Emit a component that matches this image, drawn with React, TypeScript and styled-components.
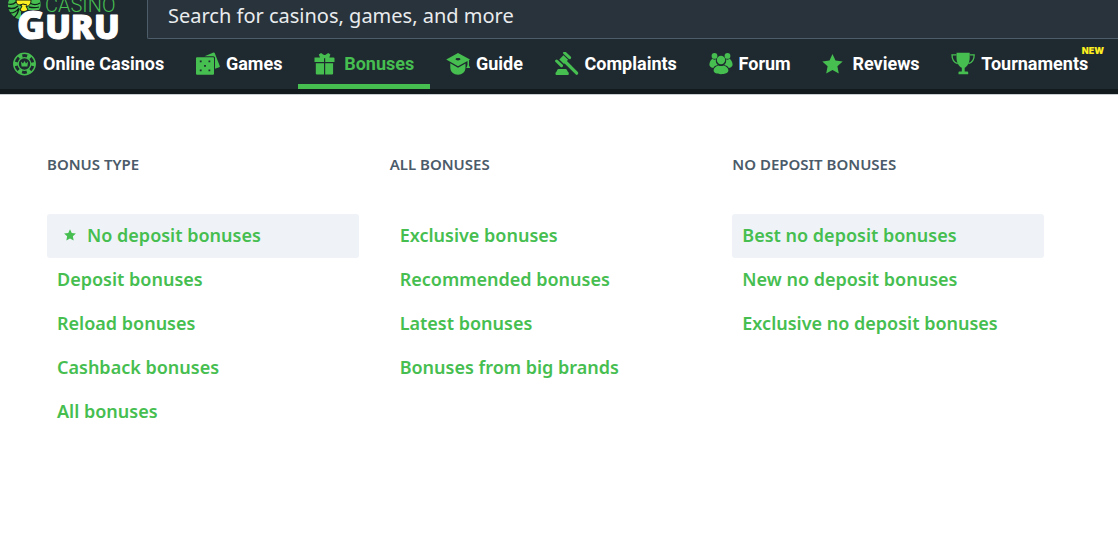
import React from "react";
import styled, { createGlobalStyle } from "styled-components";

const GREEN = "#46be50";
const DARK = "#1f2930";

const GlobalStyle = createGlobalStyle`
  *, *::before, *::after { box-sizing: border-box; }
  body {
    margin: 0;
    background: #fff;
    font-family: "Noto Sans", sans-serif;
    overflow-x: hidden;
  }
`;

const Header = styled.header`
  background: ${DARK};
  border-bottom: 5px solid #131a1e;
  box-shadow: 0 1px 0 #c9cfd0;
`;

const TopBar = styled.div`
  display: flex;
  height: 40px;
`;

const LogoLink = styled.a`
  flex: none;
  width: 147px;
  height: 40px;
`;

const SearchInput = styled.input`
  flex: 1;
  min-width: 0;
  height: 39px;
  padding: 0 20px 8px;
  border: solid #4d5d69;
  border-width: 0 0 1px 1px;
  border-radius: 0 0 0 2px;
  background: #29333b;
  color: #fff;
  font: 400 20px/30px "Noto Sans", sans-serif;
  outline: none;
  &::placeholder { color: #e9ecee; opacity: 1; }
`;

const Nav = styled.nav`
  display: flex;
  height: 49px;
  padding-right: 14px;
`;

const NavLink = styled.a<{ $active?: boolean; $first?: boolean }>`
  position: relative;
  display: flex;
  flex: 1 0 auto;
  align-items: center;
  gap: 6px;
  padding: 4px 15px 0 ${(p) => (p.$first ? 13 : 16)}px;
  border-bottom: 5px solid ${(p) => (p.$active ? GREEN : "transparent")};
  color: ${(p) => (p.$active ? GREEN : "#fff")};
  font: 700 18px/24px Roboto, sans-serif;
  text-decoration: none;
  white-space: nowrap;
`;

const NavIcon = styled.svg`
  flex: none;
  width: 24px;
  height: 24px;
  fill: ${GREEN};
`;

const Badge = styled.span`
  position: absolute;
  top: 6px;
  right: 0;
  color: #fdee21;
  font: 900 9px/10px Inter, sans-serif;
`;

const Menu = styled.main`
  display: grid;
  grid-template-columns: repeat(3, 1fr);
  gap: 31px;
  padding: 60px 74px 60px 47px;
`;

const ColumnTitle = styled.h2`
  margin: 0 0 40px;
  color: #4b5b69;
  font-size: 15px;
  line-height: 20px;
  font-weight: 600;
  text-transform: uppercase;
`;

const LinkList = styled.ul`
  margin: 0;
  padding: 0;
  list-style: none;
`;

const MenuLink = styled.a<{ $highlight?: boolean }>`
  display: flex;
  align-items: center;
  height: 44px;
  padding: 0 10px 2px;
  border-radius: 3px;
  background: ${(p) => (p.$highlight ? "#eff3f8" : "transparent")};
  color: ${GREEN};
  font-size: 18px;
  line-height: 24px;
  font-weight: 600;
  text-decoration: none;
  white-space: nowrap;
`;

const SmallStar = styled.svg`
  width: 14px;
  height: 14px;
  margin: 0 10px 0 6px;
  fill: ${GREEN};
`;

const STAR = "M12 2l3 6.500 7.200.9-5.300 4.900 1.400 7.200L12 18l-6.300 3.500 1.400-7.200L1.800 9.400 9 8.500z";

const icons: Record<string, React.ReactNode> = {
  chip: (
    <>
      <circle cx="11.500" cy="12" r="10.700" fill="none" stroke={GREEN} strokeWidth="1.500" />
      <circle cx="11.500" cy="12" r="8.600" fill="none" stroke={GREEN} strokeWidth="4" strokeDasharray="4 5" strokeDashoffset="2" />
      <circle cx="11.500" cy="12" r="6.300" fill="none" stroke={GREEN} strokeWidth="1.200" />
      <path d="M8 9.500l2 2L11.500 9l1.500 2.500 2-2-.6 5H8.600z" />
    </>
  ),
  games: (
    <>
      <path d="M8.500 4.300L17.500.6c.5-.2 1 0 1.200.5L23.800 14c.2.500 0 1-.5 1.200l-4.300 1.600V6c0-.9-.8-1.700-1.700-1.700z" />
      <path fillRule="evenodd" d="M1 5.300h16a1 1 0 011 1v15.400a1 1 0 01-1 1H1a1 1 0 01-1-1V6.300a1 1 0 011-1zM3.800 8.500v1.800h1.800V8.500zM12.500 8.500v1.800h1.800V8.500zM8.100 13v1.800h1.800V13zM3.800 17.500v1.800h1.800v-1.800zM12.500 17.500v1.800h1.800v-1.800z" />
    </>
  ),
  gift: (
    <path d="M.5 5.500H6L4.800 2.500 7 .9l3 2.200h1.200l3-2.200 2.200 1.600-1.100 3h4.200a1 1 0 011 1V10h-9.300V6.300H10V10H.5zM1.800 11.300H10v11.200H2.800a1 1 0 01-1-1zM11.200 11.300h7.900v10.200a1 1 0 01-1 1h-6.900z" />
  ),
  guide: (
    <>
      <path fillRule="evenodd" d="M12 .9L24 7.400l-1 .9v6.200h-1.500V9L12 14.300.2 7.600zM12 6.100c-1.500 0-2.400.5-2.400 1.200s.9 1.200 2.400 1.200 2.400-.5 2.400-1.200-.9-1.200-2.400-1.200z" />
      <path d="M4.300 11.300L12 15.700l7.500-4.200v4C19.500 19.900 16.300 22.700 12 22.700s-7.700-2.800-7.700-7.200zM22.200 12l2 4h-4z" />
    </>
  ),
  gavel: (
    <>
      <path d="M9.600.9L14.600 5.600" fill="none" stroke={GREEN} strokeWidth="3" strokeLinecap="round" />
      <path d="M1.600 9L6.500 13.700" fill="none" stroke={GREEN} strokeWidth="3" strokeLinecap="round" />
      <path d="M8.400 3.300l4.700 4.500-4.100 4.100-4.700-4.500z" />
      <path d="M10 9.500L21.700 21.200" fill="none" stroke={GREEN} strokeWidth="3.200" strokeLinecap="round" />
      <path d="M3.600 17h7a1.300 1.300 0 011.200.8l1.200 2.200c.6.300.8.700.8 1.300v.7a1 1 0 01-1 1H1.500a1 1 0 01-1-1v-.7c0-.6.200-1 .8-1.300l1.100-2.200A1.300 1.300 0 013.600 17z" />
    </>
  ),
  forum: (
    <>
      <circle cx="5.500" cy="3.900" r="2.900" />
      <circle cx="18.500" cy="3.900" r="2.900" />
      <path d="M3.500 6.800C5 8 6.200 7.700 7 7.300c-.6 2.600.2 4.300 1.800 5.700-2.300.4-3.800 1.500-4.600 3C1.400 15.400.2 14 .4 12.200.7 9.600 2.200 7.700 3.500 6.800zM20.500 6.800C19 8 17.800 7.700 17 7.300c.6 2.600-.2 4.300-1.800 5.700 2.300.4 3.800 1.500 4.600 3 2.800-.6 4-2 3.800-3.800-.3-2.600-1.800-4.500-3.100-5.400z" />
      <circle cx="12" cy="8" r="4.200" />
      <path d="M9.300 13.400c1.700.8 3.700.8 5.400 0 2.600.8 4.700 2.700 4.700 4.900 0 2.600-3.300 3.900-7.400 3.900s-7.400-1.300-7.400-3.900c0-2.200 2.100-4.100 4.700-4.900z" />
    </>
  ),
  star: <path d={STAR} transform="translate(-1.500 0)" />,
  trophy: (
    <>
      <path d="M5.500.8h13.200v4.700c0 5.200-2.300 9-5 10.300v3.700h2.700a.8.8 0 01.8.8v2H7.500v-2a.8.8 0 01.8-.8h2.500v-3.700c-3-1.300-5.300-5.100-5.300-10.300z" />
      <path d="M5.500 2.800H1c0 4.700 2.500 8 5.700 8.800M18.700 2.800h4.500c0 4.700-2.500 8-5.700 8.800" fill="none" stroke={GREEN} strokeWidth="1.300" />
    </>
  ),
};

const navItems = [
  { label: "Online Casinos", icon: "chip" },
  { label: "Games", icon: "games" },
  { label: "Bonuses", icon: "gift", active: true },
  { label: "Guide", icon: "guide" },
  { label: "Complaints", icon: "gavel" },
  { label: "Forum", icon: "forum" },
  { label: "Reviews", icon: "star" },
  { label: "Tournaments", icon: "trophy", badge: "NEW" },
];

const columns = [
  {
    title: "Bonus type",
    highlighted: 0,
    starred: 0,
    links: ["No deposit bonuses", "Deposit bonuses", "Reload bonuses", "Cashback bonuses", "All bonuses"],
  },
  {
    title: "All bonuses",
    links: ["Exclusive bonuses", "Recommended bonuses", "Latest bonuses", "Bonuses from big brands"],
  },
  {
    title: "No deposit bonuses",
    highlighted: 0,
    links: ["Best no deposit bonuses", "New no deposit bonuses", "Exclusive no deposit bonuses"],
  },
];

function Logo() {
  return (
    <svg width="147" height="40" viewBox="0 0 147 40">
      <path d="M9 0h31c1 4 1 7-1 10H21v10C13 18 7 11 8 3z" fill={GREEN} />
      <path
        d="M8 4c3 1 5 1 8-2M8 8c4 1 7 1 10-2M10 13c4 0 7-2 9-5M14 18c2-2 4-5 5-9M30 3c3 2 7 2 10 0M29 7c4 1 7 1 10 0"
        fill="none"
        stroke="#10201a"
        strokeWidth="1.300"
      />
      <path d="M16 0c0 3 1 5 4 5l2 1-2 4c2 2 5 2 8 0l-2-4c3 1 5-2 5-6z" fill="#fdee21" stroke="#111a16" strokeWidth="1" />
      <path d="M20 5l3-1 4 1" fill="none" stroke="#111a16" strokeWidth="1" />
      <text x="45" y="12" fill={GREEN} fontFamily="Roboto, sans-serif" fontSize="20" fontWeight="300">CASINO</text>
      <text x="17" y="39" fill="#fff" stroke="#fff" strokeWidth="1" strokeLinejoin="round" fontFamily="'Open Sans', sans-serif" fontSize="38" fontWeight="800">
        G<tspan fontSize="34">URU</tspan>
      </text>
    </svg>
  );
}

export default function App() {
  return (
    <>
      <GlobalStyle />
      <Header>
        <TopBar>
          <LogoLink href="#" aria-label="Casino Guru">
            <Logo />
          </LogoLink>
          <SearchInput
            type="search"
            aria-label="Search"
            placeholder="Search for casinos, games, and more"
          />
        </TopBar>
        <Nav>
          {navItems.map((item, i) => (
            <NavLink key={item.label} href="#" $active={item.active} $first={i === 0}>
              <NavIcon viewBox="0 0 24 24" aria-hidden="true">{icons[item.icon]}</NavIcon>
              {item.label}
              {item.badge && <Badge>{item.badge}</Badge>}
            </NavLink>
          ))}
        </Nav>
      </Header>
      <Menu>
        {columns.map((col) => (
          <section key={col.title}>
            <ColumnTitle>{col.title}</ColumnTitle>
            <LinkList>
              {col.links.map((label, i) => (
                <li key={label}>
                  <MenuLink href="#" $highlight={col.highlighted === i}>
                    {col.starred === i && (
                      <SmallStar viewBox="0 0 24 24" aria-hidden="true">
                        <path d={STAR} />
                      </SmallStar>
                    )}
                    {label}
                  </MenuLink>
                </li>
              ))}
            </LinkList>
          </section>
        ))}
      </Menu>
    </>
  );
}
